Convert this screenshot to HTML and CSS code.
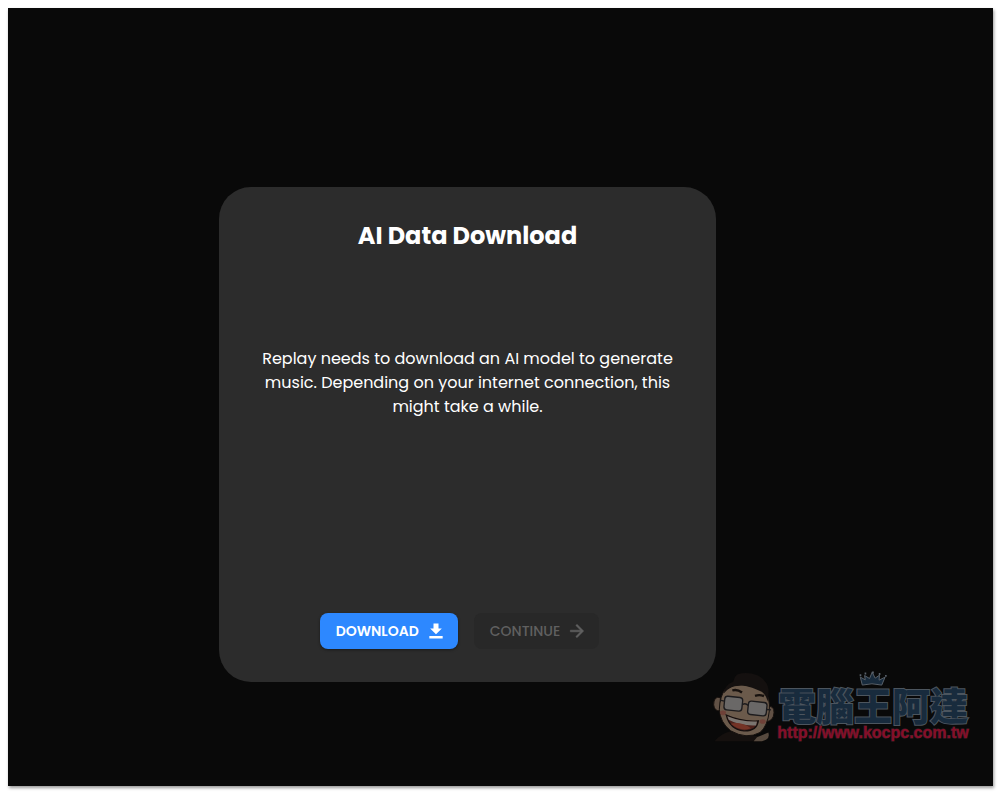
FILE: index.html
```html
<!DOCTYPE html>
<html lang="en">
<head>
<meta charset="utf-8">
<meta name="viewport" content="width=device-width, initial-scale=1">
<title>AI Data Download</title>
<link rel="stylesheet" href="styles.css">
</head>
<body>
<main class="stage">
  <section class="card">
    <h1 class="card-title">AI Data Download</h1>
    <p class="card-text">Replay needs to download an AI model to generate music. Depending on your internet connection, this might take a while.</p>
    <div class="actions">
      <button class="btn btn-primary" type="button">DOWNLOAD
        <svg class="icon" viewBox="0 0 24 24" aria-hidden="true"><path fill="currentColor" d="M19 9h-4V3H9v6H5l7 7 7-7zM4 18v3h16v-3H4z"/></svg>
      </button>
      <button class="btn btn-disabled" type="button" disabled>CONTINUE
        <svg class="icon" viewBox="0 0 24 24" aria-hidden="true"><path fill="currentColor" stroke="currentColor" stroke-width=".6" d="M12 4l-1.400 1.400 5.600 5.600H4v2h12.200l-5.600 5.600L12 20l8-8z"/></svg>
      </button>
    </div>
  </section>
  <aside class="watermark">
    <svg class="face" viewBox="40 30 195 215" aria-hidden="true">
      <path d="M48 243q18-22 45-29l75 13q18-1 25 16z" fill="#15100e"/>
      <path d="M165 243l10-12 20-8 14-6q5 16-7 22l-12 4z" fill="#574a3f"/>
      <path d="M65 112q-20-5-20 22 2 20 20 18zM207 140q20-5 19 18-2 26-24 26z" fill="#615145" stroke="#17110e" stroke-width="3"/>
      <path d="M79 88q50-30 118 4 18 20 15 60-5 46-28 65-40 22-88-5-32-25-34-65 2-39 17-59z" fill="#6b5a4b" stroke="#17110e" stroke-width="3"/>
      <path d="M75 100q3-26 29-35 3-16 12-22 28-10 62 3 26 15 31 38 2 16-2 40-5-20-18-29-26-15-62-20-31-1-52 25z" fill="#14100f"/>
      <path d="M101 91q14-5 29 6M169 107q14-5 27 1" fill="none" stroke="#17110e" stroke-width="7"/>
      <ellipse cx="73" cy="158" rx="9" ry="7" fill="#6f4138"/>
      <ellipse cx="192" cy="184" rx="9" ry="7" fill="#6f4138"/>
      <g fill="#6a6867" stroke="#1c1b1d" stroke-width="4">
        <rect x="77" y="110" width="54" height="41" rx="9" transform="rotate(6 104 130)"/>
        <rect x="148" y="125" width="56" height="40" rx="9" transform="rotate(6 176 145)"/>
        <path d="M132 133q8-6 17 3M77 123l-13-3M204 148l13 1" fill="none"/>
      </g>
      <path d="M83 165q46 21 96 17-5 31-43 30-43-4-53-47z" fill="#4d211b" stroke="#160f0e" stroke-width="4"/>
      <path d="M86 168q45 18 89 16l-3 12q-48 2-82-17z" fill="#7b7570"/>
      <path d="M96 191q29-8 61 13-31 12-61-13z" fill="#743326"/>
    </svg>
    <div class="brand">
      <svg class="crown" viewBox="270 34 88 44" aria-hidden="true"><path d="M280 76l-6-24 15 8-2-13 15 9 8-19 9 18 13-9-1 15 18-9-10 24q-30-8-59 0z" fill="#182b3d" stroke="#59616a" stroke-width="3"/><path d="M272 43h5v6h-5zM287 38h5v6h-5zM309 35h6v6h-6zM330 39h5v6h-5zM349 45h5v6h-5z" fill="#59616a"/></svg>
      <span class="brand-name" lang="zh-Hant">電腦王阿達</span>
      <span class="brand-url">http://www.kocpc.com.tw</span>
    </div>
  </aside>
</main>
</body>
</html>
```
FILE: styles.css
```css
* { box-sizing: border-box; }

body {
  margin: 0;
  padding: 8px 7px 9px 8px;
  min-height: 100vh;
  display: flex;
  background: #fff;
  font-family: Poppins, Inter, "Open Sans", sans-serif;
}

.stage {
  position: relative;
  flex: 1;
  display: flex;
  align-items: center;
  justify-content: center;
  padding: 75px 66px 0 0;
  background: #090909;
  box-shadow: 1px 2px 3px #0006;
}

.card {
  width: 100%;
  max-width: 497px;
  min-height: 495px;
  padding: 32px 32px 33px;
  display: flex;
  flex-direction: column;
  align-items: center;
  border-radius: 32px;
  background: #2c2c2c;
  color: #fff;
  text-align: center;
}

.card-title {
  margin: 0;
  font-size: 24px;
  line-height: 34px;
  font-weight: 700;
}

.card-text {
  margin: 94px 0 32px;
  max-width: 420px;
  font-size: 16px;
  line-height: 24px;
}

.actions { display: flex; margin-top: auto; }

.btn {
  height: 36px;
  margin-right: 16px;
  padding: 0 12px 0 16px;
  display: flex;
  align-items: center;
  gap: 7px;
  border: 0;
  border-radius: 8px;
  font: 500 14px/24px Poppins, Inter, sans-serif;
}

.btn-primary {
  background: #2d88ff;
  color: #fff;
  font-weight: 600;
  box-shadow: 0 1px 3px #0006;
}

.btn-disabled { background: #282828; color: #606060; }

.icon { width: 20px; height: 20px; }

.watermark {
  position: absolute;
  right: 24px;
  bottom: 44px;
  display: flex;
  align-items: flex-end;
}

.face { width: 65px; height: 72px; }

.brand {
  position: relative;
  display: flex;
  flex-direction: column;
  align-items: center;
  width: 192px;
}

.crown {
  position: absolute;
  top: -13px;
  left: 82px;
  width: 29px;
  height: 15px;
}

.brand-name {
  font: 900 38px/40px "Noto Sans CJK TC", sans-serif;
  color: #182b3d;
  -webkit-text-stroke: 2px #4c555e;
  paint-order: stroke fill;
  white-space: nowrap;
}

.brand-url {
  font: 700 16px/18px "Liberation Sans", sans-serif;
  color: #850e29;
  -webkit-text-stroke: 1px #442028;
  paint-order: stroke fill;
  white-space: nowrap;
}
```
